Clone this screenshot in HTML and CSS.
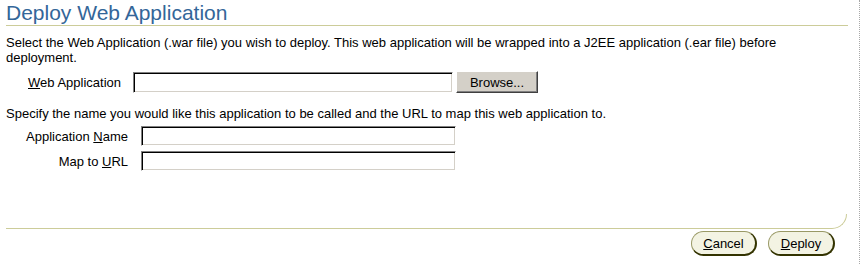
FILE: index.html
```html
<!DOCTYPE html>
<html>
<head>
<meta charset="utf-8">
<title>Deploy Web Application</title>
<link rel="stylesheet" href="styles.css">
</head>
<body>
<div class="frame">
  <div class="content">
    <h1 class="title">Deploy Web Application</h1>
    <p class="intro">Select the Web Application (.war file) you wish to deploy. This web application will be wrapped into a J2EE application (.ear file) before deployment.</p>
    <div class="form-grid grid-war">
      <label class="field-label" for="war"><u>W</u>eb Application</label>
      <div class="field-with-btn">
        <input class="text-input input-war" id="war" type="text">
        <button class="win-btn" type="button">Browse...</button>
      </div>
    </div>
    <p class="intro second">Specify the name you would like this application to be called and the URL to map this web application to.</p>
    <div class="form-grid grid-app">
      <label class="field-label" for="appname">Application <u>N</u>ame</label>
      <input class="text-input input-app" id="appname" type="text">
      <label class="field-label" for="url">Map to <u>U</u>RL</label>
      <input class="text-input input-app" id="url" type="text">
    </div>
    <div class="spacer"></div>
    <div class="footer-line"></div>
    <div class="actions">
      <button class="pill-btn btn-cancel" type="button"><u>C</u>ancel</button>
      <button class="pill-btn btn-deploy" type="button"><u>D</u>eploy</button>
    </div>
  </div>
</div>
</body>
</html>
```

FILE: styles.css
```css
html, body {
  margin: 0;
  padding: 0;
  background: #ffffff;
}

body {
  font-family: "Liberation Sans", Arial, sans-serif;
  font-size: 13px;
  color: #000000;
}

.frame {
  width: 860px;
  height: 264px;
  box-sizing: border-box;
  border-right: 1px dotted #a8a8a8;
  padding-left: 6px;
  overflow: hidden;
}

.content {
  width: 842px;
  display: flex;
  flex-direction: column;
}

.title {
  margin: 0;
  padding-top: 1px;
  font-weight: normal;
  font-size: 21px;
  line-height: 24px;
  color: #336699;
  border-bottom: 1px solid #cccc99;
}

.intro {
  margin: 9px 0 0 0;
  line-height: 15px;
  width: 800px;
}

.intro.second {
  margin-top: 13px;
}

.form-grid {
  display: grid;
  align-items: center;
}

.grid-war {
  grid-template-columns: 115px auto;
  column-gap: 12px;
  margin-top: 6px;
}

.grid-app {
  grid-template-columns: 122px auto;
  column-gap: 13px;
  row-gap: 5px;
  margin-top: 5px;
}

.field-label {
  text-align: right;
}

.field-label u,
.pill-btn u {
  text-decoration: underline;
}

.field-with-btn {
  display: flex;
  align-items: center;
  gap: 3px;
}

.text-input {
  box-sizing: border-box;
  margin: 0;
  padding: 0 2px;
  font-family: inherit;
  font-size: 13px;
  background: #ffffff;
  border-style: solid;
  border-width: 1px;
  border-color: #808080 #ffffff #ffffff #808080;
  box-shadow: inset 1px 1px 0 #000000, inset -1px -1px 0 #d4d0c8;
  outline: none;
}

.input-war {
  width: 320px;
  height: 21px;
}

.input-app {
  width: 315px;
  height: 20px;
}

.win-btn {
  box-sizing: border-box;
  width: 82px;
  height: 22px;
  margin: 0;
  padding: 0;
  font-family: inherit;
  font-size: 13px;
  color: #000000;
  background: #d4d0c8;
  border-style: solid;
  border-width: 1px;
  border-color: #ffffff #404040 #404040 #ffffff;
  box-shadow: inset -1px -1px 0 #808080;
}

.spacer {
  height: 43px;
}

.footer-line {
  height: 15px;
  box-sizing: border-box;
  border-bottom: 1px solid #cccc99;
  border-right: 1px solid #cccc99;
  border-bottom-right-radius: 15px;
  margin-right: 1px;
}

.actions {
  display: flex;
  justify-content: flex-end;
  gap: 11px;
  margin-top: 2px;
  padding-right: 13px;
}

.pill-btn {
  box-sizing: border-box;
  height: 25px;
  margin: 0;
  padding: 0;
  font-family: inherit;
  font-size: 13px;
  color: #000000;
  background: #f3f3e3;
  border-style: solid;
  border-width: 1px 2px 2px 1px;
  border-color: #999966 #333300 #333300 #999966;
  border-radius: 13px;
}

.btn-cancel {
  width: 66px;
}

.btn-deploy {
  width: 67px;
}
```
